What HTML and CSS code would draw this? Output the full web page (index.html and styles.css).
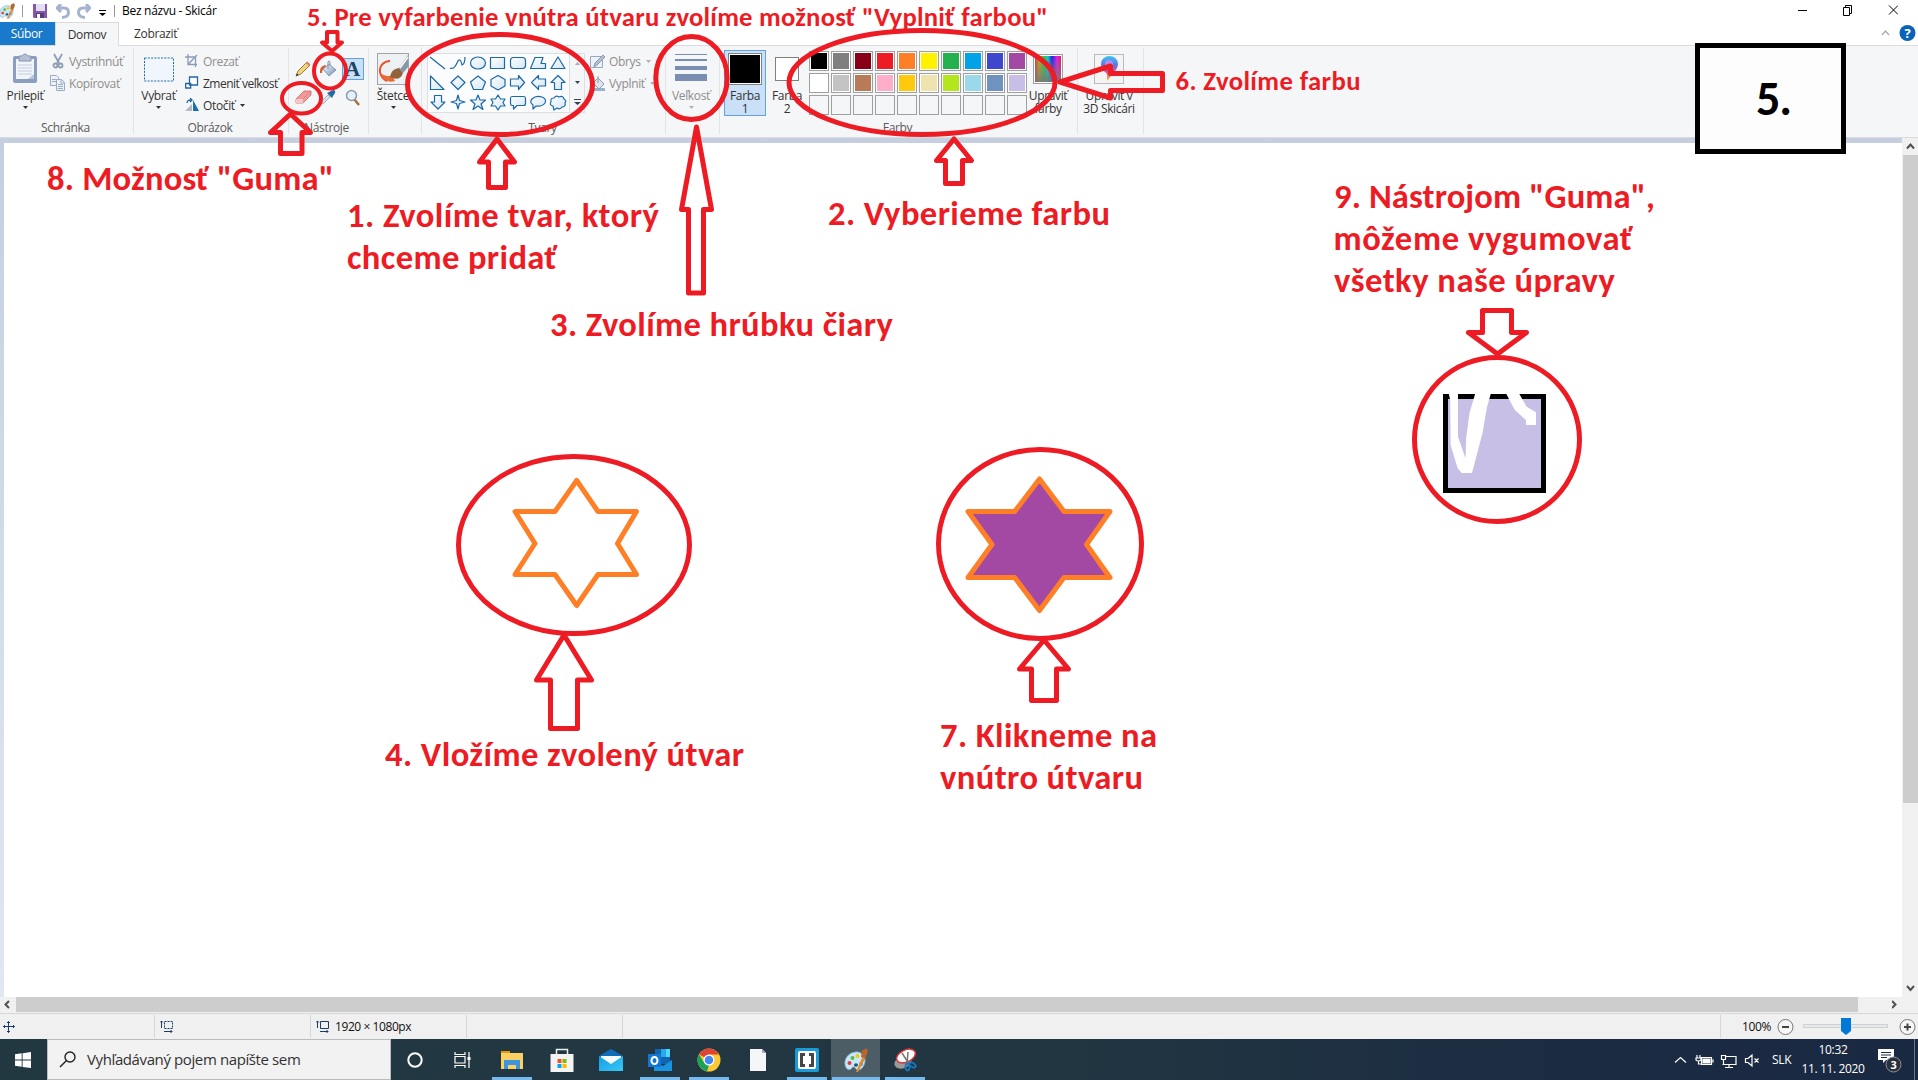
FILE: index.html
```
<!DOCTYPE html>
<html lang="sk">
<head>
<meta charset="utf-8">
<title>Bez názvu - Skicár</title>
<link rel="stylesheet" href="styles.css">
</head>
<body>
<svg class="defs" width="0" height="0">
  <defs>
    <linearGradient id="shapeFill" x1="0" y1="0" x2="1" y2="1"><stop offset="0" stop-color="#fff"/><stop offset="1" stop-color="#d3e6f5"/></linearGradient>
    <linearGradient id="steel" x1="0" y1="0" x2="1" y2="1"><stop offset="0" stop-color="#fff"/><stop offset="1" stop-color="#6d8fb4"/></linearGradient>
    <linearGradient id="mailBlue" x1="0" y1="0" x2="1" y2="1"><stop offset="0" stop-color="#1a9be8"/><stop offset="1" stop-color="#35c9f5"/></linearGradient>
    <linearGradient id="rainbow"><stop offset="0" stop-color="#d33"/><stop offset=".15" stop-color="#c8a020"/><stop offset=".35" stop-color="#20d040"/><stop offset=".5" stop-color="#10c8d0"/><stop offset=".65" stop-color="#2020e8"/><stop offset=".85" stop-color="#e020e0"/><stop offset="1" stop-color="#f01050"/></linearGradient>
    <linearGradient id="greyDown" x1="0" y1="0" x2="0" y2="1"><stop offset="0" stop-color="#888" stop-opacity="0"/><stop offset="1" stop-color="#777" stop-opacity=".9"/></linearGradient>
    <linearGradient id="pin" x1="0" y1="0" x2="0" y2="1"><stop offset="0" stop-color="#35c6f0"/><stop offset=".35" stop-color="#5a78ea"/><stop offset=".65" stop-color="#e04a90"/><stop offset="1" stop-color="#ffc020"/></linearGradient>
    <symbol id="palette" viewBox="0 0 24 24">
      <path d="M11 4C4 5 0 11 1 17c1 5 5 6 7 3 1-2 3-1 4 1 3 3 8-1 9-7C22 8 17 3 11 4z" fill="#c9e8f6" stroke="#6fa9c7" stroke-width=".8"/>
      <ellipse cx="12" cy="17" rx="2" ry="1.800" fill="#2b536b"/>
      <circle cx="5.500" cy="15" r="2" fill="#e23c3c"/><circle cx="8.500" cy="10" r="2" fill="#55b948"/><circle cx="13.500" cy="8" r="2" fill="#f5c518"/><circle cx="17" cy="16" r="2" fill="#4a8fe0"/>
      <path d="M12 24l6-14 3 1-7 13z" fill="#e08a2c"/><path d="M17 9l4 2 3-8-2-3-2 2-2 0z" fill="#b8672a"/>
    </symbol>
    <symbol id="down" viewBox="0 0 5 3"><path d="M0 0h5L2.500 3z" fill="currentColor"/></symbol>
  </defs>
</svg>
<div class="app">
  <header class="titlebar">
    <svg class="t-app" width="16" height="16"><use href="#palette"/></svg>
    <i class="t-sep"></i>
    <svg class="t-save" width="14" height="14" viewBox="0 0 14 14"><path d="M0 0h14v14H1L0 13z" fill="#8659a8"/><path d="M3 0h9v7H3z" fill="#e4dff0"/><path d="M3 9h8v5H3z" fill="#5c3c80"/><path d="M4 10h3v4H4z" fill="#fff"/></svg>
    <svg class="t-undo" width="14" height="15" viewBox="0 0 14 15"><path d="M1 4h7q4.500 0 4.500 4.500T6 13.500M5 0L1 4l4 4" fill="none" stroke="#a4b3cf" stroke-width="3"/></svg>
    <svg class="t-redo" width="14" height="15" viewBox="0 0 14 15"><path d="M13 4H6Q1.500 4 1.500 8.500T8 13.500M9 0l4 4-4 4" fill="none" stroke="#a4b3cf" stroke-width="3"/></svg>
    <svg class="t-more" width="7" height="6" viewBox="0 0 7 6"><path d="M0 0h7v1H0zM0 3h7L3.500 6z"/></svg>
    <i class="t-sep t-sep2"></i>
    <span class="t-name">Bez názvu - Skicár</span>
    <svg class="t-win" width="100" height="14" viewBox="0 0 100 14" fill="none" stroke="#000"><path d="M0 7.500h9M45.500 4.500h6v8h-6zM47.500 4.500v-2h6v8h-2M91 2.500l9 9M100 2.500l-9 9"/></svg>
  </header>
  <nav class="tabs">
    <span class="tab file">Súbor</span><span class="tab active">Domov</span><span class="tab view">Zobraziť</span>
    <svg class="help" width="36" height="18" viewBox="0 0 36 18"><path d="M1 11l3.500-4L8 11" fill="none" stroke="#aaa" stroke-width="1.300"/><circle cx="26.500" cy="9" r="8" fill="#0a63b8"/><text x="26.500" y="13.500" text-anchor="middle" class="help-q">?</text></svg>
  </nav>
  <section class="ribbon">
    <div class="group g-clip">
      <div class="body">
        <div class="big"><svg width="26" height="32" viewBox="0 0 26 32"><rect x="1" y="3" width="24" height="27" rx="2" fill="#8a9ebf"/><rect x="4" y="6" width="18" height="20" fill="#f1f4f9"/><path d="M6 12h14M6 15h14M6 18h14M6 21h14" stroke="#c4cedf"/><path d="M7 3h3q3-4 6 0h3v5H7z" fill="#b4bfd2" stroke="#8394b2"/><path d="M16 26l6-5v5z" fill="#b9c5d9"/></svg><span>Prilepiť</span><svg class="dd" width="5" height="3"><use href="#down"/></svg></div>
        <div class="list dis">
          <div class="row"><svg width="16" height="16" viewBox="0 0 16 16" fill="none" stroke="#8f9db5" stroke-width="1.800"><path d="M4 1l5 9M12 1L7 10"/><circle cx="5.500" cy="12.500" r="2"/><circle cx="10.500" cy="12.500" r="2"/></svg><span>Vystrihnúť</span></div>
          <div class="row"><svg width="16" height="16" viewBox="0 0 16 16" fill="#eef2f8" stroke="#9aabc6"><path d="M.5.5h6l2 2v8h-8z"/><path d="M6.500 4.500h5l3 3v8h-8zM11 5v3h3M8 9.500h5M8 11.500h5M8 13.500h5M2 4.500h4M2 6.500h4"/></svg><span>Kopírovať</span></div>
        </div>
      </div><div class="label">Schránka</div>
    </div>
    <div class="group g-image">
      <div class="body">
        <div class="big"><svg width="30" height="32" viewBox="0 0 30 32"><rect x=".5" y="5" width="29" height="23" fill="#f0f6fc" stroke="#1e6aab" stroke-dasharray="2 1.300"/></svg><span>Vybrať</span><svg class="dd" width="5" height="3"><use href="#down"/></svg></div>
        <div class="list">
          <div class="row dis"><svg width="14" height="14" viewBox="0 0 14 14" fill="none" stroke="#8a9bb8" stroke-width="1.300"><path d="M3 0v10.500h9M0 3h10.500v10M3 10.500L12 1"/></svg><span>Orezať</span></div>
          <div class="row"><svg width="14" height="14" viewBox="0 0 14 14" fill="#fff" stroke="#2567a5" stroke-width="1.300"><path d="M4.500 1h8v8h-8zM.7 7.500h5v4.500h-5z"/></svg><span class="tight">Zmeniť veľkosť</span></div>
          <div class="row"><svg width="14" height="14" viewBox="0 0 14 14"><path d="M0 13h7V6z" fill="#b4b9c0"/><path d="M8 13h6L8 2z" fill="#1c6eb0"/><path d="M2 5q0-3 4-3M5 0l2 2-2 2" fill="none" stroke="#2567a5" stroke-width="1.300"/></svg><span>Otočiť</span><svg class="dd" width="5" height="3"><use href="#down"/></svg></div>
        </div>
      </div><div class="label">Obrázok</div>
    </div>
    <div class="group g-tools">
      <div class="body tools">
        <div><svg width="16" height="16" viewBox="0 0 16 16"><path d="M1 15l2-5 9-9 3 3-9 9z" fill="#f3d37d" stroke="#84621e" stroke-width=".8"/><path d="M11 2l3 3 1.500-1.500-3-3z" fill="#e17b74"/><path d="M1 15l1-2.500L3.500 14z" fill="#222"/></svg></div>
        <div><svg width="17" height="18" viewBox="0 0 17 18"><path d="M1 13Q0 7 6 5l2 2q-5 1-5 6z" fill="#e4572a"/><path d="M4 9l6-5 7 6-7 6z" fill="url(#steel)" stroke="#6d87a5" stroke-width=".8"/><path d="M9 9V2q0-2 2 0v4" fill="none" stroke="#8395aa"/></svg></div>
        <div class="sel">A</div>
        <div><svg width="17" height="14" viewBox="0 0 17 14"><path d="M1 9l8-8h7v4l-8 8H1z" fill="#f09a9a" stroke="#c96a6a" stroke-width=".8"/><path d="M1 9h7v4H1z" fill="#f9c6c6"/><path d="M8 9l8-8" stroke="#d77" stroke-width=".7"/></svg></div>
        <div><svg width="16" height="16" viewBox="0 0 16 16"><path d="M1 15l1-3 6-6 2 2-6 6z" fill="#d9e4ee" stroke="#7f95aa" stroke-width=".7"/><path d="M7 4l5 5 1-2 2-3q1-3-2-3L9 3z" fill="#2369a5"/></svg></div>
        <div><svg width="16" height="17" viewBox="0 0 16 17"><path d="M9 10l5 6" stroke="#a5713f" stroke-width="2.500"/><circle cx="6.500" cy="6.500" r="5" fill="#e2f1fc" stroke="#8f9aa8" stroke-width="1.500"/></svg></div>
      </div><div class="label">Nástroje</div>
    </div>
    <div class="group g-brush">
      <div class="body">
        <div class="big"><svg width="32" height="32" viewBox="0 0 32 32"><rect x=".5" y=".5" width="31" height="31" fill="#edf1f4" stroke="#a0a4a8"/><path d="M13 8C7 8 2 13 3 19q1 6 7 9" fill="none" stroke="#e7552b" stroke-width="2"/><path d="M3 20q5 11 15 8l-3-6q-5 3-12-2z" fill="#ea6a35"/><path d="M13 24q1-8 9-9l4 5q-3 9-13 4z" fill="#93613a"/><path d="M22 15L31 2v12l-5 6z" fill="#8797a8"/><path d="M23 15l8-11" stroke="#fff" stroke-width="1.500"/></svg><span>Štetce</span><svg class="dd" width="5" height="3"><use href="#down"/></svg></div>
      </div><div class="label"></div>
    </div>
    <div class="group g-shapes">
      <div class="body">
        <div class="gallery">
          <svg width="142" height="60" viewBox="0 0 142 60" fill="url(#shapeFill)" stroke="#1f68a6" stroke-width="1.200" stroke-linejoin="round">
            <path d="M3 4l15 12" fill="none"/><path d="M23 15q4 2 7-5t5 2q3-1 3-8" fill="none"/><ellipse cx="51" cy="10" rx="7.500" ry="6"/><path d="M63.500 4.500h14v11h-14z"/><rect x="83.500" y="4.500" width="15" height="11" rx="3"/><path d="M103.500 15.500L108 4.500h8l-2 6h4.500v5z"/><path d="M124 15.500L131 4l7 11.500z"/>
            <path d="M3.500 23v13.500H17z"/><path d="M31 23l7 6.500-7 7-7-7z"/><path d="M51 23l7.500 6-3 7.500h-9l-3-7.500z"/><path d="M71 22.500l7 4v6.500l-7 4-7-4v-6.500z"/><path d="M83.500 26h8v-3.500l6 7-6 7V33h-8z"/><path d="M118.500 26h-7v-3.500l-7 7 7 7V33h7z"/><path d="M131 22.500l7 7h-3.500v7h-7v-7H124z"/>
            <path d="M7.500 42.500h7V49H18l-7 7-7-7h3.500z"/><path d="M31 42l1.500 5.500L38 49l-5.500 1.500L31 56l-1.500-5.500L24 49l5.500-1.500z"/><path d="M51 42l2 5h5.500l-4.500 4 2 5.500-5-3.500-5 3.500 2-5.500-4.500-4H49z"/><path d="M71 42l2.500 4h4.500l-2 3.500 2 3.500h-4.500L71 57l-2.500-4H64l2-3.500-2-3.500h4.500z"/><path d="M85 43.500h12q1.500 0 1.500 2v5q0 2-2 2H90L86.500 56v-3.500H85q-1.500 0-1.500-2v-5q0-2 1.500-2z"/><path d="M106 52q-4-3-1-6 4-4 10-2 5 2 3 6-3 4-9 3l-3 3z"/><path d="M126 53q-4-1-2-4-1-4 3-4 2-3 5-1 4-2 5 2 3 2 1 4 1 4-3 4-2 3-5 1l-3 2z"/>
          </svg>
          <div class="g-scroll"><span><svg class="faint" width="5" height="3"><use href="#down" transform="rotate(180 2.500 1.500)"/></svg></span><span><svg width="5" height="3"><use href="#down"/></svg></span><span><svg width="7" height="6" viewBox="0 0 7 6"><path d="M0 0h7v1H0zM0 3h7L3.500 6z" fill="#345"/></svg></span></div>
        </div>
        <div class="list dis">
          <div class="row"><svg width="16" height="15" viewBox="0 0 16 15"><path d="M.5 2.500h12v11H.5z" fill="#eef1f6" stroke="#9aa8c0"/><path d="M4 13l1-4 8-8 2 2-8 8z" fill="#b4bfd2" stroke="#8b9ab5"/></svg><span>Obrys</span><svg class="dd" width="5" height="3"><use href="#down"/></svg></div>
          <div class="row"><svg width="16" height="16" viewBox="0 0 16 16"><path d="M1 13h14v3H1z" fill="#9fb0cf"/><path d="M3 8l5-5 6 6-5 5z" fill="#dfe5ee" stroke="#8b9ab5"/><path d="M8 8V1" stroke="#8b9ab5"/></svg><span>Vyplniť</span><svg class="dd" width="5" height="3"><use href="#down"/></svg></div>
        </div>
      </div><div class="label">Tvary</div>
    </div>
    <div class="group g-size">
      <div class="body"><div class="big dis"><svg width="32" height="32" viewBox="0 0 32 32" fill="#7a8eb1"><path d="M0 1h32v1H0zM0 6h32v2H0zM0 13h32v4H0zM0 21h32v7H0z"/></svg><span>Veľkosť</span><svg class="dd" width="5" height="3"><use href="#down"/></svg></div></div><div class="label"></div>
    </div>
    <div class="group g-colors">
      <div class="body">
        <div class="big color on"><i class="chip black"></i><span>Farba<br>1</span></div>
        <div class="big color"><i class="chip white"></i><span>Farba<br>2</span></div>
        <div class="swatches">
          <i style="background:#000"></i><i style="background:#7f7f7f"></i><i style="background:#880015"></i><i style="background:#ed1c24"></i><i style="background:#ff7f27"></i><i style="background:#fff200"></i><i style="background:#22b14c"></i><i style="background:#00a2e8"></i><i style="background:#3f48cc"></i><i style="background:#a349a4"></i>
          <i style="background:#fff"></i><i style="background:#c3c3c3"></i><i style="background:#b97a57"></i><i style="background:#ffaec9"></i><i style="background:#ffc90e"></i><i style="background:#efe4b0"></i><i style="background:#b5e61d"></i><i style="background:#99d9ea"></i><i style="background:#7092be"></i><i style="background:#c8bfe7"></i>
          <i class="e"></i><i class="e"></i><i class="e"></i><i class="e"></i><i class="e"></i><i class="e"></i><i class="e"></i><i class="e"></i><i class="e"></i><i class="e"></i>
        </div>
        <div class="big edit"><svg width="30" height="30" viewBox="0 0 30 30"><rect x=".5" y=".5" width="29" height="29" fill="#fff" stroke="#a0a0a0"/><path d="M2 2h26v26H2z" fill="url(#rainbow)"/><path d="M2 2h26v26H2z" fill="url(#greyDown)"/></svg><span>Upraviť<br>farby</span></div>
      </div><div class="label">Farby</div>
    </div>
    <div class="group g-3d">
      <div class="body"><div class="big edit"><svg width="30" height="30" viewBox="0 0 30 30"><rect x=".5" y=".5" width="29" height="29" fill="#f4f4f4" stroke="#bbb"/><path d="M7 10a8.500 8 0 0 1 17 0c0 5-5 9-11 17 0-5 1-7-2-9q-4-3-4-8z" fill="url(#pin)"/><circle cx="15" cy="10" r="4" fill="#b48cf0"/></svg><span>Upraviť v<br>3D Skicári</span></div></div><div class="label"></div>
    </div>
  </section>
  <main class="work">
    <div class="canvas"></div>
    <div class="vscroll"><svg width="15" height="17" viewBox="0 0 15 17"><path d="M4 10.500l3.500-4 3.500 4" /></svg><i></i><b></b><svg width="15" height="17" viewBox="0 0 15 17"><path d="M4 6l3.500 4L11 6"/></svg></div>
  </main>
  <div class="hscroll"><svg width="16" height="15" viewBox="0 0 16 15"><path d="M9 4L5.500 7.500 9 11"/></svg><i></i><b></b><svg width="26" height="15" viewBox="0 0 26 15"><path d="M0 4l3.500 3.500L0 11"/></svg></div>
  <footer class="status">
    <div class="cell c0"><svg width="12" height="12" viewBox="0 0 12 12" fill="none" stroke="#1f3a66"><path d="M5.500 .5v11M.5 5.500h11M4 2L5.500 .5 7 2M4 10L5.500 11.500 7 10M2 4L.5 5.500 2 7M10 4L11.500 5.500 10 7"/></svg></div>
    <div class="cell"><svg width="13" height="13" viewBox="0 0 13 13" fill="none" stroke="#1f3a66"><path d="M1.500 8V1M0 2.500L1.500 1 3 2.500M4 11.500h8M10.500 10l1.500 1.500-1.500 1.500"/><path d="M4.500 1.500h8v7h-8z" stroke-dasharray="2 1"/></svg></div>
    <div class="cell"><svg width="13" height="13" viewBox="0 0 13 13" fill="none" stroke="#1f3a66"><path d="M1.500 8V1M0 2.500L1.500 1 3 2.500M4 11.500h8M10.500 10l1.500 1.500-1.500 1.500M4.500 1.500h8v7h-8z"/></svg><span>1920 × 1080px</span></div>
    <div class="cell"></div>
    <div class="zoombar"><span>100%</span>
      <svg width="141" height="20" viewBox="0 0 141 20"><rect x="26.500" y="7.500" width="84" height="3" fill="#e7eaea" stroke="#d0d0d0"/><g fill="#f6f6f6" stroke="#777"><circle cx="8.500" cy="10" r="7.500"/><circle cx="130.500" cy="10" r="7.500"/></g><path d="M5 10h7M127 10h7M130.500 6.500v7" stroke="#444" stroke-width="2"/><path d="M64 1h10v13l-5 4-5-4z" fill="#0078d7"/></svg>
    </div>
  </footer>
  <div class="taskbar">
    <div class="start"><svg width="16" height="16" viewBox="0 0 16 16" fill="#fff"><path d="M0 2.300L6.700 1.300V7.600H0zM7.600 1.200L16 0v7.600H7.600zM0 8.400h6.700v6.400L0 13.800zM7.600 8.400H16V16L7.600 14.900z"/></svg></div>
    <div class="search"><svg width="17" height="17" viewBox="0 0 17 17" fill="none" stroke="#222" stroke-width="1.400"><circle cx="11" cy="6" r="5"/><path d="M7.500 9.500L1 16"/></svg><span>Vyhľadávaný pojem napíšte sem</span></div>
    <div class="task t1"><svg width="18" height="18" viewBox="0 0 18 18"><circle cx="9" cy="9" r="6.700" fill="none" stroke="#fff" stroke-width="2"/></svg></div>
    <div class="task"><svg width="17" height="16" viewBox="0 0 17 16" fill="none" stroke="#fff" stroke-width="1.200"><path d="M1 0v2.500h10V0M1 16v-2.500h10V16M1 4.500h10v6.500H1zM15 0v16"/><path d="M13.500 5h3v3h-3z" fill="#fff" stroke="none"/></svg></div>
    <div class="task t3 run"><svg width="24" height="24" viewBox="0 0 24 24"><path d="M1 3h9v3h-9z" fill="#e29a08"/><path d="M1 5h22v16H1z" fill="#fcd063"/><path d="M4 12h16v9h-4v-4H8v4H4z" fill="#3e95dc"/></svg></div>
    <div class="task"><svg width="24" height="24" viewBox="0 0 24 24"><path d="M6.500 6V1.500h11V6" fill="none" stroke="#eee" stroke-width="1.500"/><path d="M.5 6h23v18H.5z" fill="#f3f3f3"/><path d="M7.500 11h4v4h-4z" fill="#f25022"/><path d="M12.500 11h4v4h-4z" fill="#7fba00"/><path d="M7.500 16h4v4h-4z" fill="#00a4ef"/><path d="M12.500 16h4v4h-4z" fill="#ffb900"/></svg></div>
    <div class="task"><svg width="24" height="24" viewBox="0 0 24 24"><path d="M0 8l12-7 12 7v2H0z" fill="#0f6cbd"/><path d="M2 8h20v8H2z" fill="#f5f9fc"/><path d="M0 8l12 8 12-8v15H0z" fill="url(#mailBlue)"/></svg></div>
    <div class="task run"><svg width="24" height="24" viewBox="0 0 24 24"><path d="M7 1h15v15H7z" fill="#1066b5"/><path d="M13 1h9v8h-9z" fill="#28a8ea"/><path d="M18 1h4v8h-4z" fill="#50d9ff"/><path d="M6 12l9 6 9-6v11H6z" fill="#1a93e0"/><path d="M0 6h13v13H0z" fill="#0f78d4"/><ellipse cx="6.500" cy="12.500" rx="3" ry="3.500" fill="none" stroke="#fff" stroke-width="2"/></svg></div>
    <div class="task run"><svg width="24" height="24" viewBox="0 0 24 24"><circle cx="12" cy="12" r="11.500" fill="#fcc934"/><path d="M12 12L2 6.200A11.500 11.500 0 0 1 22 6.500H12z" fill="#dc4437"/><path d="M2 6.200L8 16l4 1-2 6.300A11.500 11.500 0 0 1 2 6.200z" fill="#1ba158"/><circle cx="12" cy="12" r="5.500" fill="#fff"/><circle cx="12" cy="12" r="4.300" fill="#4688f1"/></svg></div>
    <div class="task"><svg width="24" height="24" viewBox="0 0 24 24"><path d="M4 1h12l4 4v18H4z" fill="#f5f6f7"/><path d="M16 1v4h4z" fill="#aab"/></svg></div>
    <div class="task run"><svg width="24" height="24" viewBox="0 0 24 24"><rect width="24" height="24" rx="2" fill="#1a9bd8"/><rect x="3" y="3" width="18" height="18" rx="2" fill="#fff"/><path d="M5 5h5v3H8v8h2v3H5zM19 5h-5v3h2v8h-2v3h5z" fill="#454545"/></svg></div>
    <div class="task run cur"><svg width="24" height="24"><use href="#palette"/></svg></div>
    <div class="task run"><svg width="24" height="24" viewBox="0 0 24 24"><ellipse cx="10" cy="14" rx="9" ry="6" fill="#999" transform="rotate(-25 10 14)"/><ellipse cx="13" cy="8" rx="10" ry="6" fill="#fff" stroke="#d8343a" stroke-width="1.500" transform="rotate(-25 13 8)"/><path d="M9 5l7 11M15 4l-1 12" stroke="#777" stroke-width="1.500"/><ellipse cx="14.500" cy="19" rx="2" ry="3.500" fill="none" stroke="#1878c0" stroke-width="1.800"/><ellipse cx="19.500" cy="17" rx="3.500" ry="2" fill="none" stroke="#1878c0" stroke-width="1.800" transform="rotate(30 19.500 17)"/></svg></div>
    <div class="tray">
      <svg width="88" height="20" viewBox="0 0 88 20" fill="none" stroke="#fff" stroke-width="1.200"><path d="M1 12.500l5.500-5 5.500 5"/><path d="M27.500 7.500h10v7h-10z M39 9.500v3M23 5v3M26 5v3M22 8h5v2q-2.500 2-5 0zM24.500 11v3h3"/><path d="M29 9h7v4h-7z" fill="#fff"/><path d="M52 6.500h10v8H48.500M55 14.500v3M51 17.500h8M47.500 5.500h4v4h-4zM49.500 9.500v5"/><path d="M71.500 8.500H74l4-3.500v11l-4-3.500h-2.500zM80.500 8.500l4 4M84.500 8.500l-4 4"/></svg>
      <span class="lang">SLK</span>
      <div class="clock"><span>10:32</span><span>11. 11. 2020</span></div>
      <svg class="notif" width="26" height="26" viewBox="0 0 26 26"><path d="M1 2h16v11H9l-3 3v-3H1z" fill="#fff"/><path d="M4 5.500h10M4 8h10M4 10.500h6" stroke="#1b2b42"/><circle cx="16.500" cy="17.500" r="7.500" fill="#2b2f38" stroke="#8b919b"/><text x="16.500" y="21.500" text-anchor="middle">3</text></svg>
      <i class="peek"></i>
    </div>
  </div>

  <svg class="notes" width="1918" height="1080" viewBox="0 0 1918 1080">
    <rect x="1697.500" y="45.500" width="146" height="106" fill="#fdfdfd" stroke="#000" stroke-width="5"/>
    <text class="num" x="1756" y="115" textLength="36">5.</text>
    <rect x="1445.500" y="396.500" width="98" height="94" fill="#c8bfe7" stroke="#000" stroke-width="5"/>
    <g fill="#fff"><path d="M1448.600 393H1458v43.700l7.500 21.600.8-21.300 3.200-24 5.900-20h15.600l-4 14-4.500 26-10.500 40h-10.400l-4-5-7-23-.4-45z"/><path d="M1505.800 393h13l7.800 13.700 9.400 5.600V425h-10.100v-5l-11.100-10z"/></g>
    <g fill="none" stroke="#ff7f27" stroke-width="5" stroke-linejoin="round">
      <path d="M576.700 480.500L598 511.500h38.500l-19 32 19 31H598l-21.300 31-21.700-31h-40l20-31-20-32h40z"/>
      <path fill="#a349a4" d="M1039.500 479l24.500 32.500h46l-23.500 33 23.500 33h-46l-24.500 33-24.800-33H968l24-33-24-33h46.700z"/>
    </g>
    <g class="pen">
      <ellipse cx="330" cy="71" rx="16" ry="17.500" stroke-width="4"/><ellipse cx="301.500" cy="98.300" rx="19.500" ry="15.300" stroke-width="4"/>
      <ellipse cx="500" cy="84.500" rx="92.500" ry="50"/><ellipse cx="691.500" cy="78" rx="35.700" ry="41.500"/><ellipse cx="922" cy="82.500" rx="133" ry="52"/>
      <ellipse cx="574" cy="545" rx="115.500" ry="88.500"/><ellipse cx="1040" cy="544" rx="101.500" ry="94.500"/><ellipse cx="1497" cy="439.500" rx="82.500" ry="82"/>
      <path d="M290.500 114L310.500 132.500H302V153.500H280.500V132.500H270.500Z"/>
      <path stroke-width="4" d="M327 32H337.500V42.500H342L332 51 322 42.500H327Z"/>
      <path d="M497 139L514.500 162H505.500V187.500H488.500V162H479.500Z"/>
      <path d="M696.500 127L711.500 209.500H703.500V293H688.500V209.500H681.500Z"/>
      <path d="M954 139L971.500 160.500H962.500V183.500H945.500V160.500H936.500Z"/>
      <path d="M1060 82L1110.500 66V73.500H1162.500V90.500H1110.500V98Z"/>
      <path d="M564 635L591.500 680H577.500V728.500H550.500V680H536.500Z"/>
      <path d="M1044 640L1068.500 669H1056.500V700.500H1031.500V669H1019.500Z"/>
      <path d="M1482.500 310.500H1511.500V332.500H1526.500L1497.500 354 1468.500 332.500H1482.500Z"/>
    </g>
    <g class="say">
      <text class="sm" x="307" y="25.500" textLength="741">5. Pre vyfarbenie vnútra útvaru zvolíme možnosť "Vyplniť farbou"</text>
      <text class="sm" x="1175.500" y="90" textLength="185">6. Zvolíme farbu</text>
      <text x="47" y="190" textLength="287">8. Možnosť "Guma"</text>
      <text x="347" y="226.500" textLength="312">1. Zvolíme tvar, ktorý</text><text x="347" y="269" textLength="210">chceme pridať</text>
      <text x="828" y="225" textLength="282">2. Vyberieme farbu</text>
      <text x="550" y="335.500" textLength="343">3. Zvolíme hrúbku čiary</text>
      <text x="385" y="765.500" textLength="359">4. Vložíme zvolený útvar</text>
      <text x="940" y="746.500" textLength="217">7. Klikneme na</text><text x="940" y="789" textLength="203">vnútro útvaru</text>
      <text x="1334" y="208" textLength="321">9. Nástrojom "Guma",</text><text x="1333.500" y="250" textLength="299">môžeme vygumovať</text><text x="1334" y="292" textLength="281">všetky naše úpravy</text>
    </g>
  </svg>
</div>
</body>
</html>
```
FILE: styles.css
```
* { box-sizing: border-box; }
body { margin: 0; width: 1918px; height: 1080px; overflow: hidden; background: #fff; font: 12px/13px "Segoe UI", "Open Sans", "Noto Sans", sans-serif; letter-spacing: -.35px; color: #1e1e1e; white-space: nowrap; }
svg { display: block; flex: none; }
.defs { position: absolute; }
.app { position: relative; display: flex; flex-direction: column; height: 1080px; }
.tight { letter-spacing: -.5px; }

.titlebar { height: 22px; display: flex; align-items: center; padding: 0 20px 0 0; }
.t-app { margin-left: -1px; }
.t-sep { width: 1px; height: 12px; background: #999; margin: 0 10px 0 7px; }
.t-undo { margin-left: 9px; }
.t-redo { margin-left: 7px; }
.t-more { margin: 3px 0 0 8px; }
.t-sep2 { margin: 0 7px 0 8px; }
.t-name { color: #000; margin-top: -1px; letter-spacing: -.28px; }
.t-win { margin-left: auto; margin-top: -3px; }

.tabs { height: 24px; display: flex; border-bottom: 1px solid #dadbdc; line-height: 24px; }
.tab { height: 23px; }
.file { width: 55px; background: #1979ca; color: #fff; text-align: center; padding-right: 2px; }
.active { width: 64px; height: 24px; background: #f5f6f7; border: 1px solid #dadbdc; border-bottom: 0; text-align: center; color: #333; line-height: 23px; }
.view { padding-left: 15px; color: #333; }
.help { margin: 2px 1px 0 auto; }
.help-q { font: bold 13px "Open Sans", sans-serif; fill: #fff; }

.ribbon { height: 92px; display: flex; background: #f5f6f7; border-bottom: 1px solid #dadbdc; color: #333; }
.group { position: relative; display: flex; flex-direction: column; border-right: 1px solid #e2e3e4; height: 86px; margin-top: 2px; }
.body { height: 70px; display: flex; padding-top: 5px; }
.label { height: 16px; text-align: center; line-height: 20px; color: #5a5a5a; padding-right: 2px; }
.big { display: flex; flex-direction: column; align-items: center; text-align: center; }
.big > span { margin-top: 4px; height: 16px; line-height: 13px; }
.dd { color: #333; margin-top: 1px; }
.dis, .dis .dd { color: #8d8d8d; }
.dis .dd { color: #b0b0b0; }
.list { display: flex; flex-direction: column; margin-top: -3px; }
.row { display: flex; align-items: center; height: 22px; gap: 4px; }
.row .dd { margin-left: 1px; }
.g-clip { width: 134px; }
.g-clip .big { width: 50px; }
.g-clip .row { gap: 3px; }
.g-image { width: 155px; }
.g-image .big { width: 49px; }
.g-image .list { margin-left: 2px; }
.g-tools { width: 80px; padding-left: 3px; }
.g-tools .label { padding-right: 7px; }
.tools { display: grid; grid-template-columns: 24px 25px 25px; grid-template-rows: 28px 28px; padding-top: 7px; justify-items: center; align-items: center; margin-left: -1px; }
.sel { width: 22px; height: 22px; background: #c9e0f7; border: 1px solid #62a2e4; font: bold 21px/20px "Liberation Serif", serif; text-align: center; color: #1c4568; }
.g-brush { width: 53px; }
.g-brush .big { width: 48px; }
.g-shapes { width: 244px; }
.gallery { display: flex; width: 158px; height: 60px; margin: 0 0 0 5px; background: #fbfcfd; border: 1px solid #dcdfe2; }
.gallery > svg { margin: -1px 0 0 -1px; }
.g-scroll { width: 15px; display: flex; flex-direction: column; background: #f5f6f7; border-left: 1px solid #dcdfe2; color: #345; }
.g-scroll span { flex: 1; display: flex; align-items: center; justify-content: center; }
.g-scroll .faint { color: #aab; }
.g-shapes .list { margin-left: 5px; }
.g-shapes .row { gap: 3px; }
.g-shapes .row .dd { margin-left: 2px; }
.g-size { width: 54px; }
.g-size .big { width: 50px; }
.g-colors { width: 358px; }
.g-colors .body { padding-top: 2px; }
.color { width: 42px; height: 66px; margin-left: 4px; border: 1px solid transparent; padding-top: 2px; }
.color.on { background: #c9e0f7; border-color: #62a2e4; }
.color + .color { margin-left: 0; }
.chip { width: 34px; height: 32px; border: 1px solid #808080; }
.black { background: #000; box-shadow: inset 0 0 0 1px #fff; }
.white { width: 24px; height: 24px; margin: 4px 0; background: #fff; }
.swatches { display: grid; grid-template-columns: repeat(10, 20px); grid-auto-rows: 20px; gap: 2px; margin: 1px 0 0 1px; height: 64px; }
.swatches i { border: 1px solid #a0a0a0; box-shadow: inset 0 0 0 1px #fff; }
.swatches .e { box-shadow: none; }
.g-colors .edit { width: 38px; margin: 4px 0 0 2px; }
.edit > span { margin-top: 5px; }
.g-3d { width: 66px; }
.g-3d .big { width: 62px; padding-top: 1px; }

.work { height: 859px; display: flex; padding-left: 4px; background: linear-gradient(#c5cfe0, #dfe7f2); }
.canvas { width: 1898px; margin-top: 5px; background: #fff; }
.vscroll { width: 16px; padding-left: 1px; background: #f0f0f0; display: flex; flex-direction: column; }
.vscroll i { height: 648px; background: #cdcdcd; }
.vscroll b, .hscroll b { flex: 1; }
.vscroll path, .hscroll path { fill: none; stroke: #505050; stroke-width: 2; }
.hscroll { height: 16px; background: #f0f0f0; display: flex; }
.hscroll i { width: 1842px; height: 15px; background: #cdcdcd; }

.status { height: 26px; background: #f0f0f0; border-top: 1px solid #d7d7d7; display: flex; align-items: center; color: #111; }
.cell { width: 156px; height: 23px; border-right: 1px solid #d7d7d7; display: flex; align-items: center; gap: 6px; padding-left: 5px; }
.cell span { letter-spacing: -.42px; }
.c0 { width: 155px; padding-left: 3px; }
.zoombar { margin-left: auto; width: 198px; height: 23px; border-left: 1px solid #d7d7d7; display: flex; align-items: center; gap: 6px; padding-left: 21px; }

.taskbar { height: 41px; display: flex; background: linear-gradient(90deg, #223841 0, #213641 55%, #1b2b42 82%, #1a2942); color: #fff; }
.start { width: 47px; display: flex; align-items: center; justify-content: center; padding-right: 2px; }
.search { width: 344px; background: #f2f2f2; border: 1px solid #b8bcbe; display: flex; align-items: center; gap: 11px; padding-left: 11px; font-size: 15px; letter-spacing: -.39px; color: #333; }
.task { width: 49px; display: flex; align-items: center; justify-content: center; }
.run { background: linear-gradient(#76b9ed, #76b9ed) center bottom / 40px 3px no-repeat; }
.t1 { width: 47px; }
.t3 { width: 50px; }
.cur { background: linear-gradient(#76b9ed, #76b9ed) center bottom / 48px 3px no-repeat, #4d5d66; }
.tray { margin-left: auto; width: 244px; display: flex; align-items: center; }
.lang { margin-left: 10px; width: 27px; }
.clock { width: 68px; text-align: center; display: flex; flex-direction: column; gap: 6px; padding-bottom: 1px; }
.notif { margin-left: 10px; }
.notif text { font: bold 11px "Open Sans", sans-serif; fill: #fff; }
.peek { width: 1px; align-self: stretch; margin-left: 11px; background: #69748a; }

.notes { position: absolute; left: 0; top: 0; letter-spacing: 0; }
.pen { fill: none; stroke: #ed1c24; stroke-width: 5; stroke-linejoin: round; }
.notes text { font-family: Carlito, Lato, sans-serif; font-weight: bold; }
.say { fill: #ed1c24; font-size: 34.600px; }
.say .sm { font-size: 26.700px; }
.notes .num { font-size: 48px; fill: #000; }
```
